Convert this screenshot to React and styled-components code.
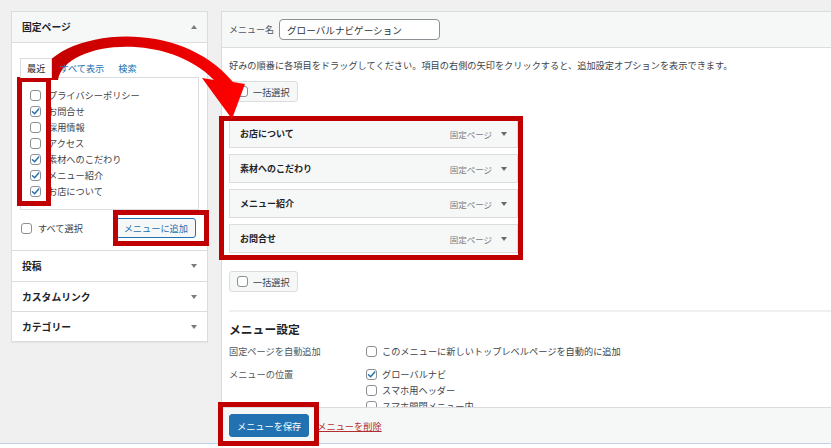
import React from 'react';
import styled, { createGlobalStyle } from 'styled-components';

const GlobalStyle = createGlobalStyle`
  html, body {
    margin: 0;
    padding: 0;
    background: #f0f0f1;
    overflow: hidden;
  }
  body {
    font-family: "Noto Sans CJK JP", "Noto Sans", sans-serif;
    font-size: 9.2px;
    color: #3c434a;
  }
  * { box-sizing: border-box; }
`;

const Page = styled.div`
  position: relative;
  width: 831px;
  height: 448px;
  overflow: hidden;
  display: flex;
  flex-direction: column;
`;

const Main = styled.div`
  display: flex;
  align-items: flex-start;
  gap: 13px;
  height: 443px;
  padding: 11px 0 0 11px;
`;

const BottomStrip = styled.div`
  height: 5px;
  background: #fff;
  border-top: 1px solid #c5d0e6;
`;

/* ---------- left column ---------- */

const SidePanel = styled.div`
  width: 197px;
  flex-shrink: 0;
  background: #fff;
  border: 1px solid #dcdcde;
  box-shadow: 0 1px 1px rgba(0, 0, 0, 0.04);
`;

const SideHead = styled.div`
  height: 31px;
  padding: 0 10px;
  display: flex;
  align-items: center;
  justify-content: space-between;
  background: #f6f7f7;
  border-bottom: 1px solid #dcdcde;
  font-size: 9.8px;
  font-weight: 700;
  color: #1d2327;
`;

const SideBody = styled.div`
  padding: 15px 8px 0;
  border-bottom: 1px solid #dcdcde;
`;

const Tabs = styled.div`
  display: flex;
  height: 20px;
`;

const Tab = styled.span`
  position: relative;
  z-index: 1;
  height: 20px;
  line-height: 19px;
  padding: 0 6px;
  border: 1px solid ${p => (p.$active ? '#dcdcde' : 'transparent')};
  border-bottom: none;
  background: ${p => (p.$active ? '#fff' : 'transparent')};
  color: ${p => (p.$active ? '#1d2327' : '#2271b1')};
`;

const ListBox = styled.div`
  margin-top: -1px;
  height: 133px;
  border: 1px solid #dcdcde;
  padding: 9px 9px;
`;

const CheckRow = styled.label`
  display: flex;
  align-items: center;
  gap: ${p => p.$gap || 7}px;
  height: 16px;
  line-height: 16px;
  color: #3c434a;
  white-space: nowrap;
`;

const SideFoot = styled.div`
  height: 40px;
  padding: 8px 3px 12px 1px;
  display: flex;
  align-items: center;
  justify-content: space-between;
`;

const AddButton = styled.button`
  height: 20px;
  padding: 0 7px;
  border: 1px solid #2271b1;
  border-radius: 3px;
  background: #f6f7f7;
  color: #2271b1;
  font: inherit;
  line-height: 18px;
`;

const AccSection = styled.div`
  height: 30px;
  padding: 0 10px;
  display: flex;
  align-items: center;
  justify-content: space-between;
  border-top: ${p => (p.$first ? 'none' : '1px solid #dcdcde')};
  font-size: 9.8px;
  font-weight: 700;
  color: #1d2327;
`;

/* ---------- right column ---------- */

const EditPanel = styled.div`
  flex: 1;
  align-self: stretch;
  margin-right: -4px;
  display: flex;
  flex-direction: column;
  background: #fff;
  border: 1px solid #dcdcde;
  border-bottom: none;
`;

const EditHead = styled.div`
  height: 36px;
  padding: 0 7px;
  display: flex;
  align-items: center;
  gap: 5px;
  background: #f6f7f7;
  border-bottom: 1px solid #dcdcde;
  font-size: 9px;
  color: #50575e;
`;

const NameInput = styled.input`
  width: 161px;
  height: 21px;
  padding: 0 7px;
  border: 1px solid #8c8f94;
  border-radius: 4px;
  background: #fff;
  font: inherit;
  font-size: 9.6px;
  color: #2c3338;
  outline: none;
`;

const EditBody = styled.div`
  flex: 1;
  min-height: 0;
  overflow: hidden;
  padding: 10px 0 0 7px;
`;

const Hint = styled.p`
  margin: 0;
  line-height: 14px;
  white-space: nowrap;
`;

const BulkButton = styled.div`
  display: inline-flex;
  align-items: center;
  gap: 5px;
  height: 21px;
  margin-top: ${p => p.$top}px;
  padding: 0 7px;
  border: 1px solid #dcdcde;
  border-radius: 3px;
  background: #f6f7f7;
  color: #3c434a;
`;

const MenuList = styled.div`
  width: 289px;
  margin-top: 17px;
  display: flex;
  flex-direction: column;
  gap: 6px;
`;

const MenuItem = styled.div`
  height: 29px;
  padding: 0 10px;
  display: flex;
  align-items: center;
  justify-content: space-between;
  background: #f6f7f7;
  border: 1px solid #dcdcde;
  font-size: 9px;
  font-weight: 700;
  color: #1d2327;
`;

const ItemMeta = styled.span`
  display: flex;
  align-items: center;
  gap: 9px;
  font-size: 8.5px;
  font-weight: 400;
  color: #787c82;
`;

const Divider = styled.div`
  margin-top: 18px;
  border-top: 2px solid #f0f0f1;
`;

const SettingsTitle = styled.h3`
  margin: 9px 0 0;
  font-size: 11.8px;
  line-height: 16px;
  font-weight: 700;
  color: #1d2327;
`;

const SettingsRow = styled.div`
  display: grid;
  grid-template-columns: 137px 1fr;
  margin-top: ${p => p.$top}px;
  line-height: 16px;
`;

const SettingLabel = styled.span`
  color: #50575e;
`;

const Options = styled.div`
  display: flex;
  flex-direction: column;
`;

const EditFoot = styled.div`
  height: 36px;
  padding: 0 7px;
  display: flex;
  align-items: center;
  gap: 8px;
  background: #f6f7f7;
  border-top: 1px solid #dcdcde;
`;

const SaveButton = styled.button`
  height: 23px;
  padding: 0 7px;
  border: 1px solid #2271b1;
  border-radius: 3px;
  background: #2271b1;
  color: #fff;
  font: inherit;
`;

const DeleteLink = styled.a`
  color: #b32d2e;
  text-decoration: underline;
`;

/* ---------- small parts ---------- */

const Box = styled.span`
  width: 11px;
  height: 11px;
  flex-shrink: 0;
  display: inline-flex;
  align-items: center;
  justify-content: center;
  border: 1px solid #8c8f94;
  border-radius: 3px;
  background: #fff;
`;

const Checkbox = ({ checked }) => (
  <Box>
    {checked && (
      <svg width="9" height="9" viewBox="0 0 10 10">
        <path d="M1.6 5.2 L4 7.6 L8.6 2.2" fill="none" stroke="#2271b1" strokeWidth="1.6" strokeLinecap="round" strokeLinejoin="round" />
      </svg>
    )}
  </Box>
);

const Caret = ({ up, color = '#787c82' }) => (
  <svg width="6" height="4" viewBox="0 0 6 4">
    <polygon points={up ? '0,4 6,4 3,0' : '0,0 6,0 3,4'} fill={color} />
  </svg>
);

/* ---------- annotation overlays ---------- */

const Highlight = styled.div`
  position: absolute;
  left: ${p => p.$x}px;
  top: ${p => p.$y}px;
  width: ${p => p.$w}px;
  height: ${p => p.$h}px;
  border: 5px solid #c00000;
  pointer-events: none;
`;

const ArrowLayer = styled.svg`
  position: absolute;
  left: 0;
  top: 0;
  pointer-events: none;
`;

const pages = [
  { name: 'プライバシーポリシー', on: false },
  { name: 'お問合せ', on: true },
  { name: '採用情報', on: false },
  { name: 'アクセス', on: false },
  { name: '素材へのこだわり', on: true },
  { name: 'メニュー紹介', on: true },
  { name: 'お店について', on: true },
];

const menuItems = ['お店について', '素材へのこだわり', 'メニュー紹介', 'お問合せ'];

export default function App() {
  return (
    <Page>
      <GlobalStyle />
      <Main>
        <SidePanel>
          <SideHead>
            固定ページ
            <Caret up />
          </SideHead>
          <SideBody>
            <Tabs>
              <Tab $active>最近</Tab>
              <Tab>すべて表示</Tab>
              <Tab>検索</Tab>
            </Tabs>
            <ListBox>
              {pages.map(p => (
                <CheckRow key={p.name}>
                  <Checkbox checked={p.on} />
                  {p.name}
                </CheckRow>
              ))}
            </ListBox>
            <SideFoot>
              <CheckRow $gap={6}>
                <Checkbox />
                すべて選択
              </CheckRow>
              <AddButton>メニューに追加</AddButton>
            </SideFoot>
          </SideBody>
          <AccSection $first>
            投稿
            <Caret />
          </AccSection>
          <AccSection>
            カスタムリンク
            <Caret />
          </AccSection>
          <AccSection>
            カテゴリー
            <Caret />
          </AccSection>
        </SidePanel>

        <EditPanel>
          <EditHead>
            メニュー名
            <NameInput defaultValue="グローバルナビゲーション" readOnly />
          </EditHead>
          <EditBody>
            <Hint>
              好みの順番に各項目をドラッグしてください。項目の右側の矢印をクリックすると、追加設定オプションを表示できます。
            </Hint>
            <BulkButton $top={9}>
              <Checkbox />
              一括選択
            </BulkButton>
            <MenuList>
              {menuItems.map(m => (
                <MenuItem key={m}>
                  {m}
                  <ItemMeta>
                    固定ページ
                    <Caret color="#646970" />
                  </ItemMeta>
                </MenuItem>
              ))}
            </MenuList>
            <BulkButton $top={18}>
              <Checkbox />
              一括選択
            </BulkButton>
            <Divider />
            <SettingsTitle>メニュー設定</SettingsTitle>
            <SettingsRow $top={6}>
              <SettingLabel>固定ページを自動追加</SettingLabel>
              <Options>
                <CheckRow $gap={5}>
                  <Checkbox />
                  このメニューに新しいトップレベルページを自動的に追加
                </CheckRow>
              </Options>
            </SettingsRow>
            <SettingsRow $top={7}>
              <SettingLabel>メニューの位置</SettingLabel>
              <Options>
                <CheckRow $gap={5}>
                  <Checkbox checked />
                  グローバルナビ
                </CheckRow>
                <CheckRow $gap={5}>
                  <Checkbox />
                  スマホ用ヘッダー
                </CheckRow>
                <CheckRow $gap={5}>
                  <Checkbox />
                  スマホ開閉メニュー内
                </CheckRow>
              </Options>
            </SettingsRow>
          </EditBody>
          <EditFoot>
            <SaveButton>メニューを保存</SaveButton>
            <DeleteLink>メニューを削除</DeleteLink>
          </EditFoot>
        </EditPanel>
      </Main>
      <BottomStrip />

      <Highlight $x={17} $y={77} $w={34} $h={129} />
      <Highlight $x={113} $y={210} $w={96} $h={36} />
      <Highlight $x={219} $y={116} $w={304} $h={144} />
      <Highlight $x={218} $y={402} $w={101} $h={44} />

      <ArrowLayer width="831" height="448" viewBox="0 0 831 448">
        <defs>
          <linearGradient id="arrowFill" gradientUnits="userSpaceOnUse" x1="40" y1="60" x2="240" y2="100">
            <stop offset="0" stopColor="#bf0000" />
            <stop offset="1" stopColor="#ff0000" />
          </linearGradient>
        </defs>
        <path
          d="M38 80 C48 32 175 12 233 82 L245 84 L232 119 L202 78 L214 80 C165 30 64 42 58 80 Z"
          fill="url(#arrowFill)"
        />
      </ArrowLayer>
    </Page>
  );
}
